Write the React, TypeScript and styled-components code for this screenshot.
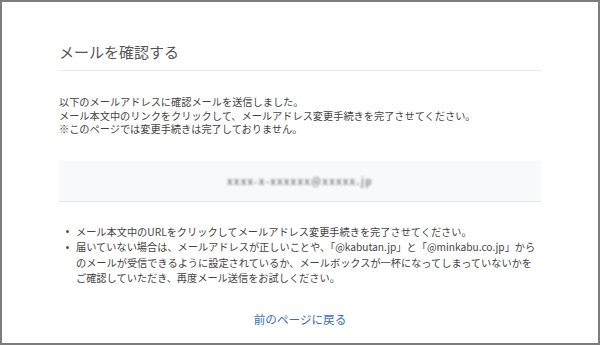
import React from 'react';
import styled, { createGlobalStyle } from 'styled-components';

const GlobalStyle = createGlobalStyle`
  html, body {
    margin: 0;
    padding: 0;
    background: #fff;
  }
  body {
    font-family: "Noto Sans CJK JP", "Noto Sans", sans-serif;
  }
`;

const Frame = styled.div`
  box-sizing: border-box;
  width: 600px;
  height: 345px;
  border: 2px solid #7d7d7d;
  background: #fff;
  display: flex;
  justify-content: center;
`;

const Content = styled.div`
  width: 482px;
  padding-top: 39px;
  display: flex;
  flex-direction: column;
`;

const Title = styled.h1`
  margin: 0;
  padding-bottom: 7px;
  font-size: 15px;
  line-height: 22px;
  font-weight: 400;
  color: #555;
  border-bottom: 1px solid #e6e9ee;
`;

const Lead = styled.p`
  margin: 24px 0 0;
  font-size: 10.2px;
  line-height: 13.5px;
  color: #444;
`;

const AddressBox = styled.div`
  margin-top: 25px;
  height: 40px;
  background: #f8f9fb;
  border-bottom: 1px solid #e2e5eb;
  display: flex;
  align-items: center;
  justify-content: center;
`;

const Blurred = styled.span`
  font-size: 10px;
  font-weight: 700;
  color: #8c8c8c;
  filter: blur(1.3px);
  letter-spacing: 1.2px;
`;

const Notes = styled.ul`
  margin: 22px 0 0;
  padding: 0 0 0 17px;
  font-size: 10.2px;
  line-height: 15.6px;
  color: #444;
  list-style: none;
`;

const Note = styled.li`
  position: relative;
  &::before {
    content: '';
    position: absolute;
    left: -10px;
    top: 6.5px;
    width: 3px;
    height: 3px;
    border-radius: 50%;
    background: #555;
  }
`;

const Back = styled.a`
  margin-top: 25px;
  align-self: center;
  font-size: 11.6px;
  line-height: 16px;
  color: #3a6cbf;
  text-decoration: none;
  cursor: pointer;
`;

export default function App() {
  return (
    <>
      <GlobalStyle />
      <Frame>
        <Content>
          <Title>メールを確認する</Title>
          <Lead>
            以下のメールアドレスに確認メールを送信しました。
            <br />
            メール本文中のリンクをクリックして、メールアドレス変更手続きを完了させてください。
            <br />
            ※このページでは変更手続きは完了しておりません。
          </Lead>
          <AddressBox>
            <Blurred>xxxx-x-xxxxxx@xxxxx.jp</Blurred>
          </AddressBox>
          <Notes>
            <Note>メール本文中のURLをクリックしてメールアドレス変更手続きを完了させてください。</Note>
            <Note>
              届いていない場合は、メールアドレスが正しいことや、「@kabutan.jp」と「@minkabu.co.jp」からのメールが受信できるように設定されているか、メールボックスが一杯になってしまっていないかをご確認していただき、再度メール送信をお試しください。
            </Note>
          </Notes>
          <Back>前のページに戻る</Back>
        </Content>
      </Frame>
    </>
  );
}
